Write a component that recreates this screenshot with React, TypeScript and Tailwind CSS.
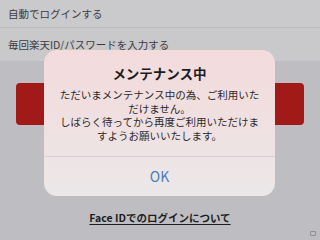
export default function App() {
  return (
    <div
      className="relative w-[320px] h-[240px] overflow-hidden bg-[#bdbdc2]"
      style={{ fontFamily: '"Noto Sans CJK JP", "Noto Sans", sans-serif' }}
    >
      {/* settings rows (dimmed under the alert) */}
      <div className="flex h-[27px] items-center bg-[#cacacd] px-2 text-[10.5px] text-[#3c3c3e]">
        自動でログインする
      </div>
      <div className="h-px bg-[#bdbdc0]" />
      <div className="flex h-[33px] items-center bg-[#c9c9cc] px-2 text-[10.5px] text-[#3c3c3e]">
        毎回楽天ID/パスワードを入力する
      </div>

      <div className="px-4 pt-[22px]">
        <div className="h-[42px] rounded-[4px] bg-[#a11a17]" />
      </div>

      <div className="mt-[85px] flex justify-center">
        <span className="text-[10.5px] font-bold text-[#1e1e20] underline underline-offset-2">
          Face IDでのログインについて
        </span>
      </div>

      {/* alert */}
      <div className="absolute left-[44px] top-[50px] flex h-[146px] w-[231px] flex-col overflow-hidden rounded-[13px] bg-gradient-to-b from-[#f3dbdc] via-[#f0e0e1] to-[#ebe8e9]">
        <div className="flex flex-1 flex-col items-center pt-[13px]">
          <div className="text-[13.5px] font-bold leading-[20px] text-[#1c1c1e]">メンテナンス中</div>
          <div className="mt-[5px] whitespace-nowrap text-center text-[10.5px] leading-[13.5px] text-[#2a2a2c]">
            ただいまメンテナンス中の為、ご利用いた
            <br />
            だけません。
            <br />
            しばらく待ってから再度ご利用いただけま
            <br />
            すようお願いいたします。
          </div>
        </div>
        <div className="h-px bg-[#d9cfd1]" />
        <div className="flex h-[39px] items-center justify-center text-[14px] text-[#4a7cc0]">OK</div>
      </div>

      <div className="absolute bottom-[4px] right-[4px] h-[5px] w-[6px] rounded-[1px] border border-[#8e8e93]" />
    </div>
  );
}
